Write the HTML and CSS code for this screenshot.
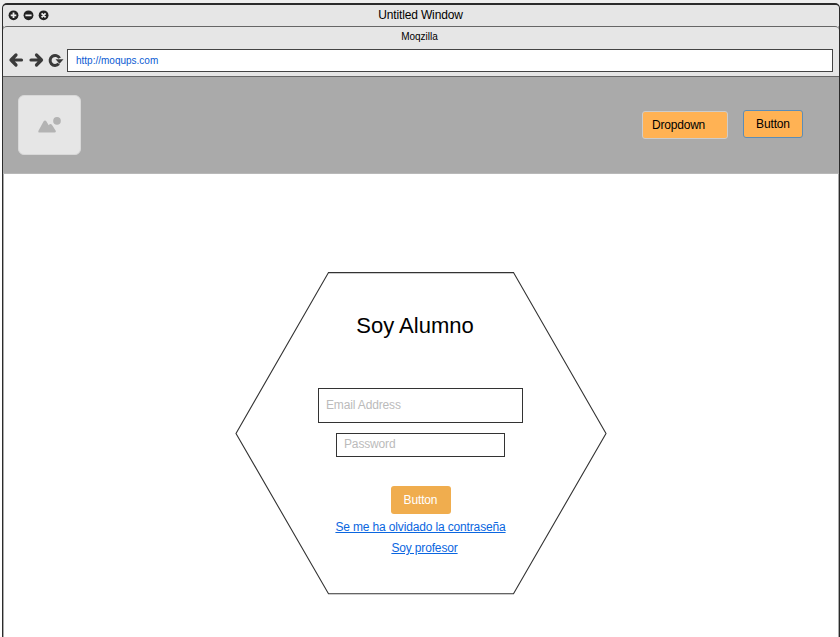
FILE: index.html
```html
<!DOCTYPE html>
<html lang="es">
<head>
<meta charset="utf-8">
<title>Untitled Window</title>
<link rel="stylesheet" href="styles.css">
</head>
<body>
<div class="window">
  <div class="titlebar">
    <svg class="controls" width="42" height="12" viewBox="0 0 42 12">
      <g fill="#222"><circle cx="5.500" cy="6.300" r="4.900"/><circle cx="20.500" cy="6.300" r="4.900"/><circle cx="35.600" cy="6.300" r="4.900"/></g>
      <g stroke="#eee" stroke-width="1.800"><path d="M2.700 6.300h5.600M5.500 3.500v5.600M17.400 6.300h6.200M33.600 4.300l4 4M37.600 4.300l-4 4"/></g>
    </svg>
    <span class="title">Untitled Window</span>
  </div>
  <div class="toolbar">
    <div class="page-title">Moqzilla</div>
    <div class="address-row">
      <svg class="nav" width="56" height="18" viewBox="0 0 56 18">
        <g fill="none" stroke="#3a3a3a" stroke-width="3.200" stroke-linecap="round" stroke-linejoin="round">
          <path d="M13.500 9H3M8 4L3 9l5 5"/>
          <path d="M23 9h10M28.500 4l5 5-5 5"/>
          <path d="M50.800 12.800a5 5 0 1 1 .8-5.600" stroke-width="3" stroke-linecap="butt"/>
        </g>
        <path d="M47.500 8.300h8l-4 4.500z" fill="#3a3a3a"/>
      </svg>
      <div class="address">http://moqups.com</div>
    </div>
  </div>
  <header class="header">
    <div class="logo">
      <svg width="24" height="18" viewBox="0 0 24 18">
        <path d="M1.600 16.500Q-.3 16.500 .6 14.600L5.500 5.500Q7 3.300 8.500 5.500L10.700 9.200Q12.500 6.800 14.200 9.200L17.600 14.600Q18.400 16.500 16.500 16.500Z" fill="#b3b3b3"/>
        <circle cx="19" cy="4.900" r="3.800" fill="#b3b3b3"/>
      </svg>
    </div>
    <div class="dropdown">Dropdown</div>
    <button class="header-button">Button</button>
  </header>
  <main class="content">
    <div class="hexagon">
      <svg class="outline" width="372" height="324" viewBox="0 0 372 324">
        <path d="M93.500 1.600H278.500L371 162.400L278.500 322.800H93.500L1 162.400Z" fill="#fff" stroke="#333" stroke-width="1.100"/>
      </svg>
      <form class="login">
        <h1>Soy Alumno</h1>
        <div class="field email">Email Address</div>
        <div class="field password">Password</div>
        <button type="button" class="submit">Button</button>
        <a href="#">Se me ha olvidado la contraseña</a>
        <a href="#" class="teacher">Soy profesor</a>
      </form>
    </div>
  </main>
</div>
</body>
</html>
```
FILE: styles.css
```css
* { box-sizing: border-box; }
body {
  margin: 0;
  width: 840px;
  height: 637px;
  overflow: hidden;
  padding: 3px 0 0 2px;
  background: linear-gradient(#eee 30px, #fff 80px);
  font: 12px/14px "Liberation Sans", Arial, sans-serif;
  letter-spacing: -0.15px;
  color: #000;
}
button { font: inherit; padding: 0; letter-spacing: inherit; }
.window {
  width: 838px;
  height: 650px;
  border: 1px solid #2b2b2b;
  border-width: 2px 1px 0;
  border-radius: 5px 5px 0 0;
  background: #fff;
  box-shadow: inset 1px 0 #aaa, inset -1px 0 #aaa;
}
.titlebar {
  position: relative;
  height: 21px;
  padding: 4px 0 0 5px;
  background: #e6e6e6;
  border-radius: 4px 4px 0 0;
  text-align: center;
}
.controls { position: absolute; left: 5px; top: 4px; }
.title { display: block; height: 14px; line-height: 14px; margin-top: -1px; padding-right: 6px; }
.toolbar {
  height: 51px;
  border-top: 1px solid #666;
  border-bottom: 1px solid #666;
  border-radius: 4px 4px 0 0;
  background: #e6e6e6;
}
.page-title { height: 22px; font-size: 10px; line-height: 20px; text-align: center; padding-right: 3px; letter-spacing: 0; }
.address-row { display: flex; padding-left: 5px; }
.nav { margin: 2px 3px 0 0; flex: none; }
.address {
  width: 766px;
  height: 23px;
  border: 1px solid #444;
  background: #fff;
  padding-left: 8px;
  font-size: 10px;
  line-height: 22px;
  letter-spacing: 0;
  color: #0b5bd3;
}
.header {
  display: flex;
  height: 97px;
  padding: 18px 36px 0 15px;
  background: #aaa;
  border-bottom: 1px solid #b8b8b8;
}
.logo {
  display: flex;
  align-items: center;
  justify-content: center;
  width: 63px;
  height: 60px;
  border: 1px solid #d8d8d8;
  border-radius: 6px;
  background: #e6e6e6;
}
.dropdown {
  width: 86px;
  height: 28px;
  margin: 16px 15px 0 auto;
  padding-left: 9px;
  border: 1px solid #ccc;
  border-radius: 3px;
  background: #ffb254;
  line-height: 27px;
  letter-spacing: -0.2px;
}
.header-button {
  width: 60px;
  height: 28px;
  margin-top: 15px;
  border: 1px solid #5b8db8;
  border-radius: 3px;
  background: #ffb254;
  line-height: 26px;
  color: #000;
}
.content { padding: 97px 0 0 232px; }
.hexagon { position: relative; width: 372px; height: 324px; }
.outline { position: absolute; inset: 0; }
.login {
  position: relative;
  display: flex;
  flex-direction: column;
  align-items: center;
  padding: 41px 1px 0 0;
}
h1 { margin: 0 11px 49px 0; font-size: 22px; line-height: 27px; font-weight: 400; letter-spacing: 0; }
.field { border: 1px solid #333; background: #fff; color: #bbb; padding-left: 7px; }
.email { width: 205px; height: 35px; line-height: 33px; }
.password { width: 169px; height: 24px; margin-top: 10px; line-height: 21px; }
.submit {
  width: 60px;
  height: 28px;
  margin: 29px 0 6px;
  border: 0;
  border-radius: 3px;
  background: #f0ad4e;
  color: #fff;
}
.login a { margin-bottom: 7px; color: #0a66e0; }
.login .teacher { margin-left: 8px; }
```
